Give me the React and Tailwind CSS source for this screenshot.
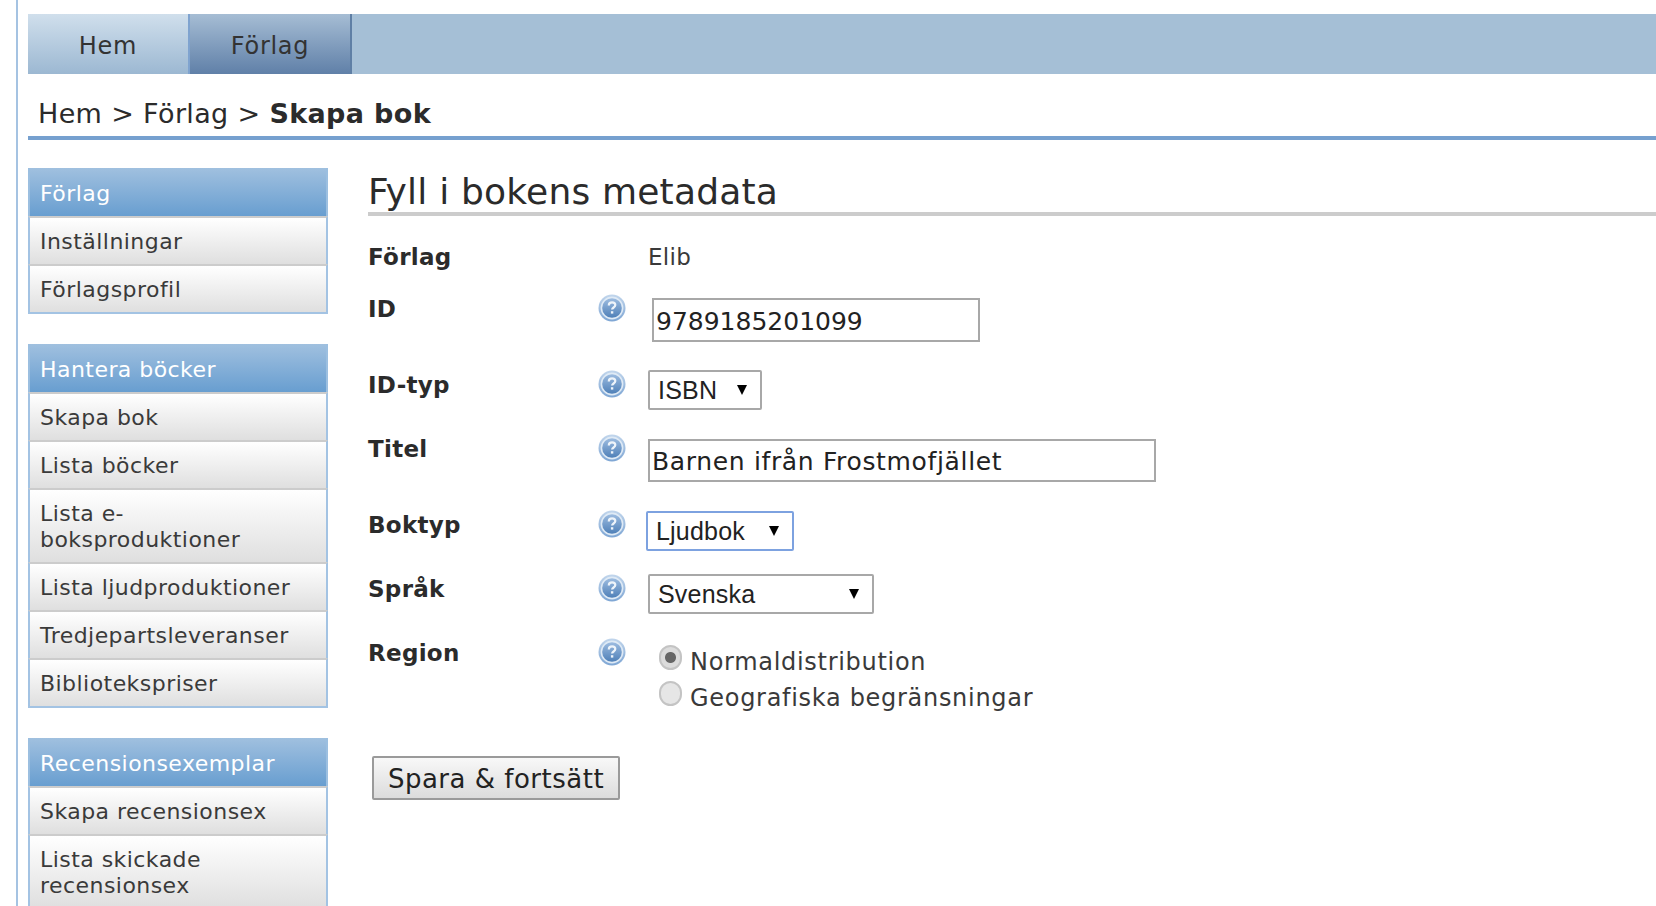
import React from "react";

const menu = [
  {
    title: "Förlag",
    items: ["Inställningar", "Förlagsprofil"],
  },
  {
    title: "Hantera böcker",
    items: [
      "Skapa bok",
      "Lista böcker",
      "Lista e-boksproduktioner",
      "Lista ljudproduktioner",
      "Tredjepartsleveranser",
      "Bibliotekspriser",
    ],
  },
  {
    title: "Recensionsexemplar",
    items: ["Skapa recensionsex", "Lista skickade recensionsex"],
  },
];

// Round blue help badge next to each form row
const HelpIcon = () => (
  <svg width="28" height="28" viewBox="0 0 28 28" className="block">
    <defs>
      <linearGradient id="helpFill" x1="0" y1="0" x2="0" y2="1">
        <stop offset="0" stopColor="#9dbce0" />
        <stop offset="1" stopColor="#4f80b8" />
      </linearGradient>
      <linearGradient id="helpRing" x1="0" y1="0" x2="0" y2="1">
        <stop offset="0" stopColor="#c2d6ec" />
        <stop offset="1" stopColor="#7ea6d4" />
      </linearGradient>
    </defs>
    <circle cx="14" cy="14" r="13.5" fill="url(#helpRing)" />
    <circle cx="14" cy="14" r="11.4" fill="#dfeaf5" />
    <circle cx="14" cy="14" r="9.8" fill="url(#helpFill)" />
    <path
      d="M10.8 11.4c0-2 1.4-3.1 3.3-3.1s3.2 1 3.2 2.8c0 2.4-3.2 2.4-3.2 4.5"
      fill="none"
      stroke="#eef4fa"
      strokeWidth="2.2"
    />
    <rect x="12.9" y="17.2" width="2.4" height="2.4" fill="#eef4fa" />
  </svg>
);

const Select = ({ value, className }) => (
  <div className={`relative ${className}`}>
    <select
      defaultValue={value}
      className="block w-full h-full appearance-none bg-white pl-[8px] text-[25px] tracking-[0.2px] text-[#222] font-['Liberation_Sans',sans-serif] outline-none"
    >
      <option>{value}</option>
    </select>
    <span className="absolute right-[13px] top-1/2 -translate-y-1/2 w-0 h-0 border-x-[5px] border-x-transparent border-t-[10px] border-t-black" />
  </div>
);

const Row = ({ label, className, children }) => (
  <div className={`flex ${className}`}>
    <div className="w-[230px] font-bold text-[23px] tracking-[0.3px] leading-[30px] text-[#2b2b2b]">{label}</div>
    <div className="w-[48px]">
      <HelpIcon />
    </div>
    <div>{children}</div>
  </div>
);

const Radio = ({ label, checked }) => (
  <label className="flex items-center h-[36px] text-[24px] tracking-[0.7px] text-[#3a3a3a]">
    <input
      type="radio"
      name="region"
      defaultChecked={checked}
      className="appearance-none w-[23px] h-[25px] mr-[8px] -mt-[9px] rounded-full border-2 border-[#c4c4c4] bg-[#e6e6e6] checked:bg-[radial-gradient(circle,#666_0,#666_5px,#dcdcdc_6px)]"
    />
    {label}
  </label>
);

export default function App() {
  return (
    <div className="h-[906px] overflow-hidden bg-white font-['DejaVu_Sans',sans-serif]">
      <div className="ml-4 h-full border-l-2 border-[#a5c3e2] pl-[10px] pt-[14px]">
        <nav className="flex h-[60px] bg-[#a5bfd6] text-[24px] tracking-[0.7px] text-[#333]">
          <a className="flex items-center justify-center pt-[4px] w-[160px] bg-gradient-to-b from-[#d0dfec] to-[#9cb8d2]">Hem</a>
          <a className="flex items-center justify-center pt-[4px] w-[164px] border-x-2 border-l-[#7fa3cf] border-r-[#5f7fa5] bg-gradient-to-b from-[#a6bdd4] to-[#6080a8]">Förlag</a>
        </nav>

        <div className="h-[66px] pl-[10px] pt-[22px] border-b-4 border-[#76a0cf] text-[27px] tracking-[0.35px] leading-[36px] text-[#2b2b2b]">
          Hem &gt; Förlag &gt; <b>Skapa bok</b>
        </div>

        <div className="flex mt-[28px]">
          <aside className="w-[300px] shrink-0">
            {menu.map((group) => (
              <div key={group.title} className="mb-[30px]">
                <div className="h-[48px] px-[10px] border-x-2 border-[#9cbfe0] bg-gradient-to-b from-[#a0c0df] to-[#689ed0] text-[22px] tracking-[0.45px] leading-[52px] text-white">
                  {group.title}
                </div>
                {group.items.map((item, i) => (
                  <div
                    key={item}
                    className={`pl-[10px] pr-[20px] pt-[11px] pb-[9px] border-x-2 border-x-[#a3c3e3] border-t-2 border-t-[#cccccc] bg-gradient-to-b from-white to-[#dfdfdf] text-[22px] tracking-[0.45px] leading-[26px] text-[#3a3a3a] ${
                      i === group.items.length - 1 ? "border-b-2 border-b-[#a3c3e3]" : ""
                    }`}
                  >
                    {item}
                  </div>
                ))}
              </div>
            ))}
          </aside>

          <main className="flex-1 ml-[40px]">
            <h1 className="h-[48px] border-b-4 border-[#cccccc] text-[36px] tracking-[0.2px] leading-[48px] text-[#2b2b2b]">
              Fyll i bokens metadata
            </h1>

            <div className="flex h-[78px] pt-[24px] text-[23px] tracking-[0.3px] leading-[34px]">
              <div className="w-[280px] font-bold text-[#2b2b2b]">Förlag</div>
              <div className="text-[#3a3a3a]">Elib</div>
            </div>

            <Row label="ID" className="h-[76px]">
              <input
                defaultValue="9789185201099"
                className="block ml-[6px] mt-[4px] w-[328px] h-[44px] border-2 border-[#a8a8a8] pl-[2px] pt-[2px] text-[25px] text-[#222] outline-none"
              />
            </Row>
            <Row label="ID-typ" className="h-[64px]">
              <Select value="ISBN" className="ml-[2px] w-[114px] h-[40px] border-2 border-[#a8a8a8] rounded-[2px]" />
            </Row>
            <Row label="Titel" className="h-[76px]">
              <input
                defaultValue="Barnen ifrån Frostmofjället"
                className="block ml-[2px] mt-[5px] w-[508px] h-[43px] border-2 border-[#a8a8a8] pl-[2px] pt-[1px] text-[25px] tracking-[0.65px] text-[#222] outline-none"
              />
            </Row>
            <Row label="Boktyp" className="h-[64px]">
              <Select value="Ljudbok" className="mt-[1px] w-[148px] h-[40px] border-2 border-[#7da2e0] rounded-[2px]" />
            </Row>
            <Row label="Språk" className="h-[64px]">
              <Select value="Svenska" className="ml-[2px] w-[226px] h-[40px] border-2 border-[#a8a8a8] rounded-[2px]" />
            </Row>
            <Row label="Region" className="h-[118px]">
              <div className="ml-[13px] mt-[6px]">
                <Radio label="Normaldistribution" checked />
                <Radio label="Geografiska begränsningar" />
              </div>
            </Row>

            <button className="ml-[4px] w-[248px] h-[44px] pt-[2px] border-2 border-[#9a9a9a] rounded-[2px] bg-gradient-to-b from-[#f8f8f8] to-[#dcdcdc] text-[26px] tracking-[0.5px] text-[#222]">
              Spara &amp; fortsätt
            </button>
          </main>
        </div>
      </div>
    </div>
  );
}
